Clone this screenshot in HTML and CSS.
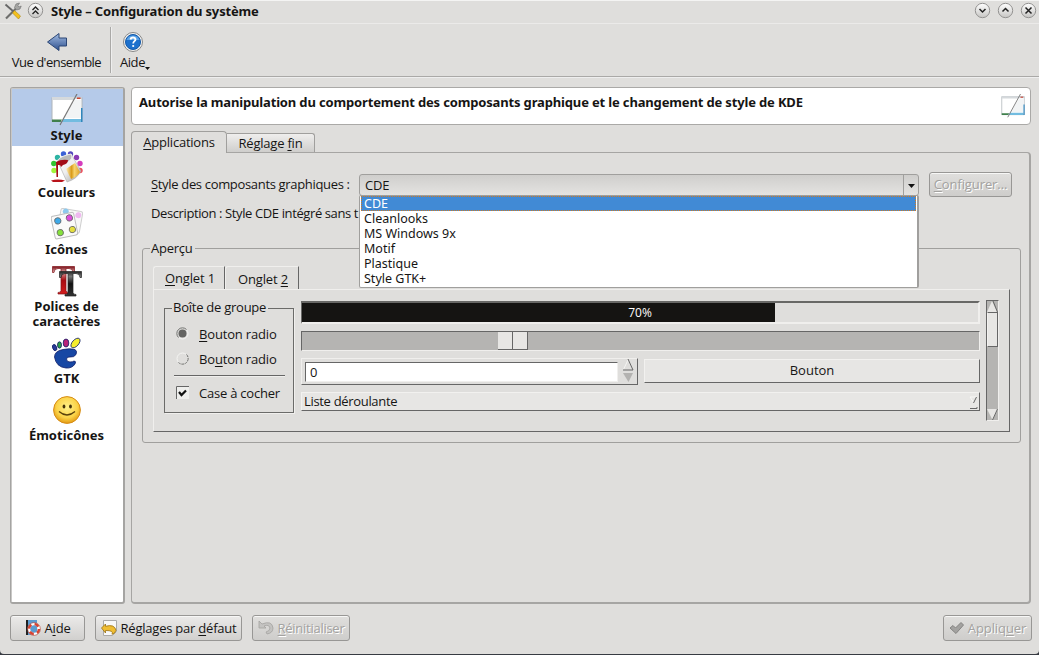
FILE: index.html
```html
<!DOCTYPE html>
<html lang="fr">
<head>
<meta charset="utf-8">
<title>Style – Configuration du système</title>
<link rel="stylesheet" href="styles.css">
</head>
<body>
<svg width="0" height="0" class="defs" aria-hidden="true">
  <defs>
    <linearGradient id="silver" x1="0" y1="0" x2="0" y2="1"><stop offset="0" stop-color="#fff"/><stop offset="1" stop-color="#c6c5c3"/></linearGradient>
    <linearGradient id="blue" x1="0" y1="0" x2="0" y2="1"><stop offset="0" stop-color="#a4bde2"/><stop offset="1" stop-color="#2c4f8e"/></linearGradient>
    <linearGradient id="gold" x1="0" y1="0" x2="1" y2="0"><stop offset="0" stop-color="#fff0c0"/><stop offset=".4" stop-color="#d99b18"/><stop offset=".6" stop-color="#f7d36c"/><stop offset="1" stop-color="#e0a226"/></linearGradient>
    <linearGradient id="metal" x1="0" y1="0" x2="1" y2="1"><stop offset="0" stop-color="#fff"/><stop offset=".5" stop-color="#eee"/><stop offset="1" stop-color="#999"/></linearGradient>
    <linearGradient id="red" x1="0" y1="0" x2="0" y2="1"><stop offset="0" stop-color="#7a1018"/><stop offset=".2" stop-color="#d9a0a0"/><stop offset=".5" stop-color="#a80c12"/><stop offset="1" stop-color="#d41c1c"/></linearGradient>
    <linearGradient id="dark" x1="0" y1="0" x2="0" y2="1"><stop offset="0" stop-color="#222"/><stop offset=".2" stop-color="#777"/><stop offset=".5" stop-color="#111"/><stop offset="1" stop-color="#333"/></linearGradient>
    <radialGradient id="face" cx=".5" cy=".4" r=".6"><stop offset="0" stop-color="#fff08a"/><stop offset=".65" stop-color="#fbd348"/><stop offset="1" stop-color="#e39a12"/></radialGradient>
    <symbol id="style-icon" viewBox="0 0 32 32">
      <path d="M1 3.500h30v24H1z" fill="#fff" stroke="#aeb4b8"/>
      <path d="M1 3h24l-2 3H1z" fill="#d5d9dc"/>
      <path d="M24 6h6v18H13z" fill="#f2f4f5"/>
      <path d="M25 3h6v2h-7z" fill="#c9cdd2"/><path d="M26 3.500h3.500V5H26z" fill="#c43"/>
      <path d="M1 25.500h10L9.500 28H1z" fill="#40804c"/><path d="M12 25h18v3H10z" fill="#72bce0"/>
      <path d="M30 14h1.500v14H30z" fill="#2f86bd"/>
      <path d="M26 0 9 31" stroke="#777" stroke-width="1.200"/>
    </symbol>
  </defs>
</svg>
<div class="window">
  <header class="titlebar">
    <svg class="tools" width="18" height="18" viewBox="0 0 18 18">
      <path d="M2 16.500 12 6.500" stroke="#6e6e6c" stroke-width="2.200"/><path d="M15.500 1 12 2l-1.500 3.500 2 2.500 3.500-1 1.200-3-2.200 1-1.200-1.200z" fill="#a5a5a3" stroke="#777" stroke-width=".7"/>
      <path d="M1.500 2.500 10 10" stroke="#666" stroke-width="1.800"/><path d="m10.500 8.500 6 5.500-2 3-6-6z" fill="#f4c01c" stroke="#a88414" stroke-width=".6"/>
    </svg>
    <svg class="round" width="17" height="17" viewBox="0 0 17 17"><circle cx="8.500" cy="8.500" r="7.200" fill="url(#silver)" stroke="#939291"/><path d="m5.500 8 3-3 3 3m-6 4 3-3 3 3" fill="none" stroke="#222" stroke-width="1.300"/></svg>
    <h1 class="title">Style – Configuration du système</h1>
    <svg class="round first" width="17" height="17" viewBox="0 0 17 17"><circle cx="8.500" cy="8.500" r="7.200" fill="url(#silver)" stroke="#939291"/><path d="m5.500 7 3 3 3-3" fill="none" stroke="#222" stroke-width="1.500"/></svg>
    <svg class="round" width="17" height="17" viewBox="0 0 17 17"><circle cx="8.500" cy="8.500" r="7.200" fill="url(#silver)" stroke="#939291"/><path d="m5.500 9.500 3-3 3 3" fill="none" stroke="#222" stroke-width="1.500"/></svg>
    <svg class="round" width="17" height="17" viewBox="0 0 17 17"><circle cx="8.500" cy="8.500" r="7.200" fill="url(#silver)" stroke="#939291"/><path d="m5.500 5.500 6 6m0-6-6 6" fill="none" stroke="#222" stroke-width="1.500"/></svg>
  </header>
  <nav class="toolbar">
    <div class="tool overview">
      <svg width="22" height="22" viewBox="0 0 22 22"><path d="M1.500 11 13 2.500V7h7.500v8H13v4.500z" fill="url(#blue)" stroke="#2c4675"/></svg>
      <span>Vue d'ensemble</span>
    </div>
    <div class="tool help">
      <svg width="22" height="22" viewBox="0 0 22 22"><circle cx="11" cy="11" r="9.500" fill="#f2f2f2" stroke="#888"/><circle cx="11" cy="11" r="7.500" fill="#1c70cd" stroke="#155aa8"/><path d="M4.500 9a7 7 0 0 1 13 0q-6 0-13 0z" fill="#5aa2e6"/><path d="M8.500 8.500q.3-2 2.500-2t2.500 2c0 1.700-2.300 1.700-2.300 4" fill="none" stroke="#fff" stroke-width="1.800"/><circle cx="11.200" cy="15" r="1.100" fill="#fff"/></svg>
      <span>Aide</span>
      <svg class="drop" width="5" height="3" viewBox="0 0 5 3"><path d="M0 0h5L2.500 3z" fill="#111"/></svg>
    </div>
  </nav>
  <main class="main">
    <aside class="sidebar">
      <div class="item selected"><svg width="32" height="32"><use href="#style-icon"/></svg><span>Style</span></div>
      <div class="item">
        <svg width="32" height="32" viewBox="0 0 32 32">
          <circle cx="3" cy="19.500" r="2.700" fill="#9ff53b"/><circle cx="2.800" cy="12.500" r="2.700" fill="#31c531"/><circle cx="6.500" cy="6.500" r="2.700" fill="#2eb4a4"/><circle cx="12.500" cy="3" r="2.700" fill="#3b61d6"/><circle cx="19.500" cy="3" r="2.700" fill="#5649bd"/><circle cx="25.500" cy="6.500" r="2.700" fill="#8b3bb5"/><circle cx="29" cy="12.500" r="2.700" fill="#d43dbd"/><circle cx="29" cy="19.500" r="2.700" fill="#ee4b58"/>
          <path d="M7 11 20 3l10 17q-4 8-14 11z" fill="url(#metal)" stroke="#aaa" stroke-width=".6"/><path d="m15 18 9-6 5 9q-3 5-9 7z" fill="url(#gold)"/><path d="M6 10q3-5 14-7 3 4-3 8T6 12z" fill="#b9b9b9" stroke="#eee"/>
          <path d="M5 11q5-3 12-2 0 4-5 5l-2 2-1-2H7v12H5.500z" fill="#a30d16"/><path d="M0 29.500q7-2 14 0l-3 1.500H2z" fill="#b8131a"/>
        </svg><span>Couleurs</span></div>
      <div class="item">
        <svg width="32" height="32" viewBox="0 0 32 32">
          <g transform="rotate(10 20 14)"><rect x="8" y="2" width="22" height="22" rx="2" fill="#f8f8f8" stroke="#cfcfcf"/><circle cx="13" cy="4.500" r="3" fill="#8ec9ed"/><circle cx="26" cy="6" r="3" fill="#efb9ef"/></g>
          <g transform="rotate(-12 14 18)"><rect x="2" y="6" width="23" height="23" rx="2" fill="#fafafa" stroke="#bebebe"/><circle cx="8" cy="11.500" r="3.200" fill="#3eaae9" stroke="#666" stroke-width=".8"/><circle cx="20" cy="11" r="3.200" fill="#dc4edc" stroke="#666" stroke-width=".8"/><circle cx="8" cy="23.500" r="3.200" fill="#85e13c" stroke="#666" stroke-width=".8"/><circle cx="20.500" cy="23" r="3.200" fill="#e5df3f" stroke="#666" stroke-width=".8"/></g>
        </svg><span>Icônes</span></div>
      <div class="item tall">
        <svg width="32" height="32" viewBox="0 0 32 32"><path d="M1.500 1.500h22v6H22q0-4-4-4h-3v22q0 2 3 2V29H7v-1.500q3 0 3-2v-22H7q-4 0-4 4H1.500z" fill="url(#red)" stroke="#821218" stroke-width=".7"/><path d="M8.500 6.500h22v6H29q0-4-4-4h-3v19q0 2 3 2V31H14v-1.500q3 0 3-2v-19h-3q-4 0-4 4H8.500z" fill="url(#dark)" stroke="#222" stroke-width=".7"/></svg><span>Polices de<br>caractères</span></div>
      <div class="item">
        <svg width="32" height="32" viewBox="0 0 32 32" stroke="#101e68" stroke-width=".8"><path d="M3.500 20q0-6 8.500-7.500 7-1.500 12 0 2.500 1.500 1 5-2 3-6 2.500-3-.5-3.500 2 0 3 3.500 3 3 0 4-1 2.500 0 1 3-3 4.500-9 4Q5 30 3.500 20z" fill="#1747a4"/><ellipse cx="3.800" cy="10.500" rx="2" ry="3.200" transform="rotate(-20 4 11)" fill="#2a3a98"/><ellipse cx="8.500" cy="8" rx="2" ry="3.200" fill="#2da044"/><ellipse cx="15" cy="6" rx="2.800" ry="4" fill="#b82277"/><ellipse cx="24.500" cy="6" rx="3.200" ry="5.800" transform="rotate(42 24.500 6)" fill="#f5ed2c"/></svg><span>GTK</span></div>
      <div class="item">
        <svg width="32" height="32" viewBox="0 0 32 32"><circle cx="16" cy="16" r="13.400" fill="url(#face)" stroke="#d78d17"/><ellipse cx="13" cy="12.500" rx="1.400" ry="2" fill="#453309"/><ellipse cx="19.500" cy="12.500" rx="1.400" ry="2" fill="#453309"/><path d="M8 17.500q8 7 16 0" fill="none" stroke="#5a420b" stroke-width="1.400"/></svg><span>Émoticônes</span></div>
    </aside>
    <section class="content">
      <div class="headline"><strong>Autorise la manipulation du comportement des composants graphique et le changement de style de KDE</strong><svg width="24" height="24"><use href="#style-icon"/></svg></div>
      <div class="tabs"><div class="tab active"><span><u>A</u>pplications</span></div><div class="tab"><span>Réglage <u>f</u>in</span></div></div>
      <div class="page">
        <div class="row">
          <label><u>S</u>tyle des composants graphiques :</label>
          <div class="combo"><span>CDE</span><i><svg width="7" height="4" viewBox="0 0 7 4"><path d="M0 0h7L3.500 4z" fill="#111"/></svg></i>
            <ul class="menu"><li class="on">CDE</li><li>Cleanlooks</li><li>MS Windows 9x</li><li>Motif</li><li>Plastique</li><li>Style GTK+</li></ul>
          </div>
          <button class="btn off configure"><span><u>C</u>onfigurer...</span></button>
        </div>
        <p class="description"><span>Description : Style CDE intégré sans t</span></p>
        <fieldset class="preview">
          <legend>Aperçu</legend>
          <div class="mtabs"><div class="mtab one"><span><u>O</u>nglet 1</span></div><div class="mtab two"><span>Onglet <u>2</u></span></div></div>
          <div class="mpage">
            <fieldset class="group">
              <legend>Boîte de groupe</legend>
              <label class="opt"><svg width="13" height="13" viewBox="0 0 13 13"><circle cx="6.500" cy="6.500" r="5.500" fill="none" stroke="#f5f5f3"/><path d="M2.500 10.500a5.500 5.500 0 0 1 8-8" fill="none" stroke="#686866"/><circle cx="6.500" cy="6.500" r="4" fill="#646462"/></svg><span><u>B</u>outon radio</span></label>
              <label class="opt"><svg width="13" height="13" viewBox="0 0 13 13"><circle cx="6.500" cy="6.500" r="5.500" fill="none" stroke="#f5f5f3"/><path d="M10.500 2.500a5.500 5.500 0 0 1-8 8" fill="none" stroke="#686866" stroke-dasharray="3 .7"/></svg><span>Bo<u>u</u>ton radio</span></label>
              <hr>
              <label class="opt check"><svg width="13" height="13" viewBox="0 0 13 13"><path d="M0 0h13v13H0z" fill="#efefed"/><path d="M.5 13V.5H13" fill="none" stroke="#666"/><path d="m3 6 2.500 3L10 4.500" fill="none" stroke="#111" stroke-width="2.200"/></svg><span>Case à cocher</span></label>
            </fieldset>
            <div class="widgets">
              <div class="progress"><div class="fill" style="width:70%"></div><span>70%</span></div>
              <div class="slider"><div class="thumb"><i></i><i></i></div></div>
              <div class="pair">
                <div class="spin"><div class="field">0</div><svg width="13" height="25" viewBox="0 0 13 25"><path d="M1.500 11.500 6 2" stroke="#f5f5f3"/><path d="m6 1 5 11H1" fill="none" stroke="#666"/><path d="M1 15h10L6.500 24z" fill="#b3b2b0"/></svg></div>
                <div class="push"><span>Bouton</span></div>
              </div>
              <div class="drop-list"><span>Liste déroulante</span><svg width="10" height="17" viewBox="0 0 10 17"><path d="M8 4H1l4 6" fill="none" stroke="#f8f8f6"/><path d="m4.500 10 3-6M1 15.500h7V14" fill="none" stroke="#666"/></svg></div>
            </div>
            <div class="scroll">
              <svg width="11" height="11" viewBox="0 0 11 11"><path d="M0 11 5 0l5 11z" fill="#e7e6e4"/><path d="m6 0 4.500 11" stroke="#666"/></svg>
              <div class="grip"></div>
              <svg class="down" width="11" height="11" viewBox="0 0 11 11"><path d="M0 0h11L5.500 11z" fill="#e7e6e4"/><path d="m5.500 11 5-11" stroke="#666"/></svg>
            </div>
          </div>
        </fieldset>
      </div>
    </section>
  </main>
  <footer class="actions">
    <button class="btn b-help"><svg width="16" height="16" viewBox="0 0 16 16"><path d="M1 0h11v15H1z" fill="#5c9bd0"/><path d="M1 0h2v15H1z" fill="#222"/><circle cx="9" cy="9" r="5" fill="none" stroke="#fff" stroke-width="2.500"/><circle cx="9" cy="9" r="5" fill="none" stroke="#d84332" stroke-width="2.500" stroke-dasharray="4.500 3.350"/><circle cx="9" cy="9" r="6.400" fill="none" stroke="#b54436" stroke-width=".6"/></svg><span>A<u>i</u>de</span></button>
    <button class="btn b-default"><svg width="16" height="16" viewBox="0 0 16 16"><path d="M2.500.5h13v11l-4 4h-9z" fill="#f8f8f8" stroke="#aaa"/><path d="m.5 8 4-4v2.300q9-2.500 10.500 4-1 3.500-4 4 2-4-6.500-3.800V13z" fill="#efbd32" stroke="#9a7112" stroke-width=".8"/></svg><span>Réglages par <u>d</u>éfaut</span></button>
    <button class="btn off b-reset"><svg width="16" height="16" viewBox="0 0 16 16"><path d="M1 1v7h7L6 6q5-2 6 2 0 3-4 4l1 2q6-1 6-6-1-8-11-4z" fill="#c4c3c1" stroke="#a3a2a0" stroke-width=".8"/></svg><span><u>R</u>éinitialiser</span></button>
    <button class="btn off b-apply"><svg width="16" height="16" viewBox="0 0 16 16"><path d="m1 8 3-2.500L6.500 8 12 2.500 14.500 5 7 13.500z" fill="#a3a2a0" stroke="#858482"/></svg><span>Appliq<u>u</u>er</span></button>
  </footer>
</div>
</body>
</html>
```
FILE: styles.css
```css
* { box-sizing: border-box; }
html, body { height: 100%; }
body { margin: 0; overflow: hidden; background: #373b42; font: 13px/18px "Open Sans", "Noto Sans", sans-serif; color: #161514; }
svg { flex: none; display: block; }
.defs { position: absolute; }
u { text-decoration-thickness: 1px; text-underline-offset: 2px; }
span, label { white-space: nowrap; }
.window { height: 654px; display: flex; flex-direction: column; background: #dfdedc; border-top: 1px solid #f4f4f3; border-radius: 0 0 4px 4px; }
.titlebar { height: 23px; flex: none; display: flex; align-items: center; padding: 0 2px 3px 4px; border-bottom: 1px solid #ebeae9; }
.tools { margin-right: 5px; }
.title { margin: 0 0 0 7px; font: 700 13px/18px "Noto Sans", sans-serif; letter-spacing: -.16px; }
.first { margin-left: auto; }
.titlebar .first ~ .round { margin-left: 6px; }
.toolbar { height: 53px; flex: none; display: flex; padding-top: 3px; border-bottom: 1px solid #aaa9a7; box-shadow: 0 1px #eee; }
.tool { display: flex; flex-direction: column; align-items: center; height: 46px; padding-top: 4px; position: relative; }
.overview { width: 111px; border-right: 1px solid #aaa9a7; box-shadow: 1px 0 #eee; padding-left: 3px; }
.overview span { letter-spacing: -.52px; }
.help { width: 43px; }
.tool span { line-height: 19px; }
.help span { letter-spacing: -.4px; }
.drop { position: absolute; right: 4px; bottom: 3px; }
.main { display: flex; gap: 6px; padding: 10px 8px 0 10px; height: 527px; flex: none; }
.sidebar { width: 115px; flex: none; height: 517px; background: #fff; border: 2px solid #a5a4a2; border-width: 1px 2px 2px 1px; border-radius: 3px; padding: 1px 0 1px 1px; box-shadow: inset 1px 1px #c9c8c6; }
.item { height: 57px; display: flex; flex-direction: column; align-items: center; padding: 5px 2px 0 0; font: 700 13px/15px "Noto Sans", sans-serif; text-align: center; }
.item span { margin-top: 2px; }
.item.tall { height: 72px; }
.selected { background: #b5cae9; }
.content { flex: 1; min-width: 0; display: flex; flex-direction: column; height: 517px; }
.headline { height: 38px; flex: none; background: #fff; border: 1px solid #aaa9a7; border-radius: 4px; display: flex; align-items: center; padding: 0 5px 0 7px; }
.headline strong { white-space: nowrap; margin-bottom: 8px; flex: 1; font: 700 13px/18px "Noto Sans", sans-serif; letter-spacing: -.155px; }
.tabs { height: 27px; flex: none; margin-top: 6px; display: flex; align-items: flex-end; position: relative; z-index: 1; margin-bottom: -6px; letter-spacing: -.22px; }
.tab { height: 19px; margin-bottom: 6px; width: 88px; display: flex; justify-content: center; align-items: center; border: 1px solid #a09f9d; border-bottom: 0; border-left: 0; background: linear-gradient(#efeeed, #cfcecc); border-radius: 0 3px 0 0; }
.tab.active { height: 22px; width: 96px; margin-bottom: 5px; padding-bottom: 1px; background: #dfdedc; border-left: 1px solid #a09f9d; border-radius: 4px 4px 0 0; }
.page { flex: 1; border: 2px solid #a6a5a3; border-width: 1px 2px 2px 1px; border-radius: 0 4px 4px; padding: 19px 7px 0 10px; }
.row { display: flex; align-items: center; height: 25px; padding: 0 9px; }
.row label { width: 208px; flex: none; letter-spacing: -.33px; padding-bottom: 1px; }
.combo { width: 560px; flex: none; height: 22px; border: 1px solid #a09f9d; border-radius: 3px; background: linear-gradient(#cfcecc, #e4e3e1); display: flex; position: relative; padding-left: 5px; line-height: 21px; margin-right: 10px; letter-spacing: -.2px; }
.combo > i { width: 15px; margin-left: auto; border-left: 1px solid #a09f9d; display: flex; justify-content: center; padding-top: 9px; }
.menu { position: absolute; z-index: 2; top: 20px; left: -1px; width: 560px; height: 93px; margin: 0; padding: 0 1px; list-style: none; background: #fff; border: 1px solid #a09f9d; border-right-width: 2px; border-radius: 2px; font-family: "Noto Sans", sans-serif; font-size: 12.500px; letter-spacing: 0; }
.menu li { height: 15px; line-height: 16px; padding-left: 3px; }
.menu .on { padding-left: 2px; background: #418ad5; color: #fff; border: 1px dotted #cf7a22; line-height: 13px; }
.btn { height: 26px; margin: 0; padding: 0; display: flex; align-items: center; justify-content: center; gap: 3px; border: 1px solid #989795; border-radius: 3px; background: linear-gradient(#ebeae9, #d1d0ce); color: #161514; font: inherit; box-shadow: inset 0 1px #f7f7f6; }
.btn.off { color: #a3a2a0; text-shadow: 1px 1px #fff; background: linear-gradient(#e0dfdd, #cecdcb); }
.btn span { margin-top: -1px; }
.configure { width: 83px; flex: none; height: 25px; letter-spacing: -.1px; }
.description { margin: 7px 9px 0; line-height: 19px; letter-spacing: -.39px; }
fieldset { margin: 0; min-width: 0; }
.preview { width: 879px; height: 204px; margin-top: 16px; padding: 9px 10px 0 10px; border: 1px solid #a09f9d; border-radius: 3px; }
legend { padding: 0 2px 0 1px; margin-left: -3px; line-height: 18px; letter-spacing: -.25px; }
.mtabs { display: flex; height: 23px; align-items: flex-end; letter-spacing: -.15px; }
.mtab { height: 23px; border: 1px solid #f0efed; border-right: 1px solid #666; border-bottom: 0; display: flex; align-items: center; justify-content: center; border-radius: 3px 0 0; padding-left: 2px; }
.mtab.one { width: 72px; }
.mtab.two { width: 74px; padding-top: 1px; }
.mpage { display: flex; height: 143px; border: 1px solid #f0efed; border-right-color: #666; border-bottom-color: #666; padding: 9px 10px 0 10px; }
.group { width: 130px; flex: none; height: 114px; border: 1px solid #6b6b69; box-shadow: 1px 1px #f0efed; padding: 4px 8px 0 11px; margin-right: 7px; }
.group legend { margin-left: -4px; line-height: 17px; padding-bottom: 1px; }
.opt { display: flex; height: 25px; align-items: center; gap: 10px; letter-spacing: -.17px; }
.opt.check { letter-spacing: -.22px; }
.group hr { margin: 4px 0 3px -2px; border: 0; border-top: 1px solid #666; border-bottom: 1px solid #f0efed; }
.widgets { width: 679px; flex: none; margin-right: 6px; padding-top: 2px; }
.progress { height: 23px; border: 1px solid #f0efed; border-top: 2px solid #686866; border-left: 1px solid #686866; border-bottom-width: 2px; border-right-width: 2px; position: relative; }
.fill { height: 100%; background: #151412; }
.progress span { position: absolute; inset: 0; text-align: center; color: #fff; line-height: 19px; font-size: 12px; }
.slider { height: 20px; margin-top: 7px; background: #b5b4b2; border: 1px solid #f0efed; border-top-color: #666; border-left-color: #666; padding-left: 196px; }
.thumb { display: flex; width: 30px; height: 18px; }
.thumb i { width: 15px; background: #e7e6e4; border-right: 1px solid #666; border-bottom: 1px solid #666; }
.pair { display: flex; gap: 6px; margin-top: 7px; height: 27px; }
.spin { width: 337px; border: 1px solid #f0efed; border-right-color: #666; border-bottom-color: #666; display: flex; padding: 3px 2px 0 3px; }
.field { width: 314px; height: 20px; background: #fff; border: 1px solid #f0efed; border-top-color: #666; border-left-color: #666; padding-left: 4px; line-height: 18px; margin-right: 4px; }
.spin svg { margin-top: -4px; }
.push { flex: 1; height: 24px; margin-top: 1px; background: #e7e6e4; border: 1px solid #f2f1ef; border-right-color: #666; border-bottom-color: #666; text-align: center; line-height: 21px; }
.drop-list { height: 19px; margin-top: 7px; background: #e7e6e4; border: 1px solid #f2f1ef; border-right-color: #666; border-bottom-color: #666; display: flex; justify-content: space-between; padding-left: 2px; line-height: 17px; letter-spacing: -.32px; }
.scroll { width: 13px; flex: none; height: 121px; margin-top: 1px; background: #b5b4b2; border: 1px solid #f0efed; border-top-color: #666; border-left-color: #666; display: flex; flex-direction: column; }
.grip { height: 35px; background: #e7e6e4; border: 1px solid #666; border-left-color: #f2f1ef; }
.down { margin-top: auto; }
.actions { display: flex; padding: 11px 7px 0 10px; gap: 10px; }
.b-help { width: 75px; gap: 4px; letter-spacing: -.2px; }
.b-default { width: 147px; gap: 4px; letter-spacing: -.22px; }
.b-reset { width: 98px; gap: 4px; letter-spacing: -.27px; }
.b-apply { width: 89px; margin-left: auto; letter-spacing: -.1px; }
```
